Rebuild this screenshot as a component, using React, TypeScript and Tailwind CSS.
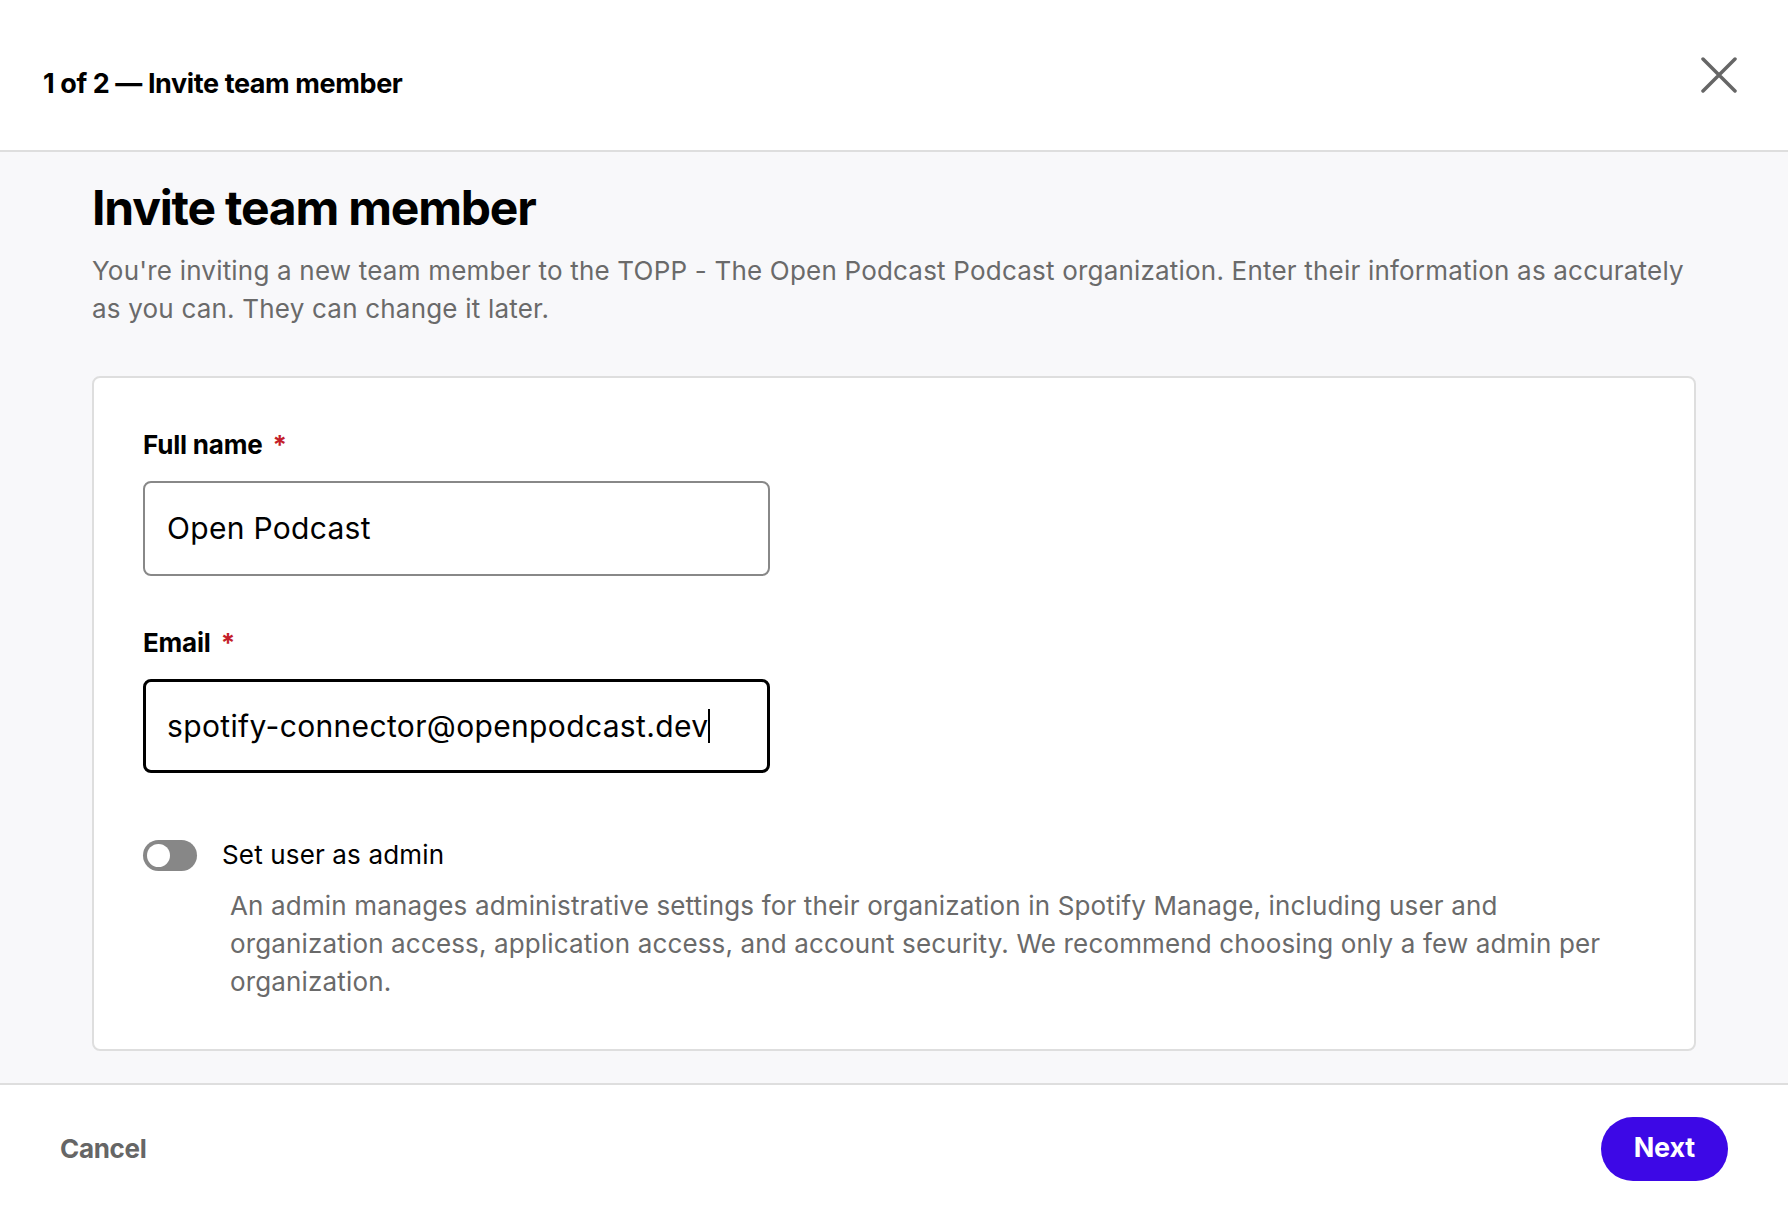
import React from "react";

const InviteModal: React.FC = () => {
  return (
    <div className="h-[1206px] flex flex-col bg-white text-black font-['Inter','Noto_Sans',sans-serif]">
      <header className="h-[152px] shrink-0 flex items-center justify-between border-b-2 border-[#dedede] pl-[43px] pr-[50px]">
        <h1 className="text-[27px] font-bold tracking-[-0.4px] mt-[18px]">1 of 2 — Invite team member</h1>
        <button aria-label="Close" className="w-[38px] h-[38px] flex items-center justify-center">
          <svg width="36" height="36" viewBox="0 0 36 36" fill="none" stroke="#666" strokeWidth="3.5" strokeLinecap="round">
            <path d="M2 2L34 34M34 2L2 34" />
          </svg>
        </button>
      </header>

      <main className="flex-1 bg-[#f8f8fa] px-[92px] pt-[26px]">
        <h2 className="text-[48px] leading-[60px] font-bold tracking-[-1.2px]">Invite team member</h2>
        <p className="mt-[14px] text-[26px] leading-[38px] text-[#6a6a6a] tracking-[0.2px]">
          You're inviting a new team member to the TOPP - The Open Podcast Podcast organization. Enter their information as accurately as you can. They can change it later.
        </p>

        <section className="mt-[48px] bg-white border-2 border-[#dedede] rounded-[8px] pl-[49px] pr-[48px] pt-[48px] pb-[48px]">
          <label className="flex items-center gap-[10px] text-[26px] leading-[38px] font-bold tracking-[-0.2px]">
            Full name <span className="text-[#c41e2a]">*</span>
          </label>
          <div className="mt-[17px] w-[627px] h-[95px] border-2 border-[#888] rounded-[8px] flex items-center px-[22px] text-[30px] tracking-[0.3px]">
            Open Podcast
          </div>

          <label className="mt-[48px] flex items-center gap-[10px] text-[26px] leading-[38px] font-bold tracking-[-0.2px]">
            Email <span className="text-[#c41e2a]">*</span>
          </label>
          <div className="mt-[17px] w-[627px] h-[94px] border-[3px] border-black rounded-[8px] flex items-center px-[21px] text-[30px] tracking-[0.35px]">
            spotify-connector@openpodcast.dev<span className="w-[2px] h-[34px] bg-black" />
          </div>

          <div className="mt-[63px] flex items-center gap-[25px]">
            <div className="w-[54px] h-[31px] rounded-full bg-[#878787] flex items-center px-[4px]">
              <div className="w-[23px] h-[23px] rounded-full bg-white" />
            </div>
            <span className="text-[26px] leading-[38px] tracking-[0.15px]">Set user as admin</span>
          </div>
          <p className="mt-[13px] ml-[87px] max-w-[1420px] text-[26px] leading-[38px] text-[#6a6a6a] tracking-[0.15px]">
            An admin manages administrative settings for their organization in Spotify Manage, including user and organization access, application access, and account security. We recommend choosing only a few admin per organization.
          </p>
        </section>
      </main>

      <footer className="h-[123px] shrink-0 flex items-center justify-between border-t-2 border-[#dedede] px-[60px] pt-[6px] bg-white">
        <button className="text-[26px] font-bold text-[#666] tracking-[-0.3px]">Cancel</button>
        <button className="h-[64px] px-[33px] rounded-full bg-[#3d08e6] text-white text-[27px] font-bold tracking-[-0.2px]">Next</button>
      </footer>
    </div>
  );
};

export default function App() {
  return <InviteModal />;
}
